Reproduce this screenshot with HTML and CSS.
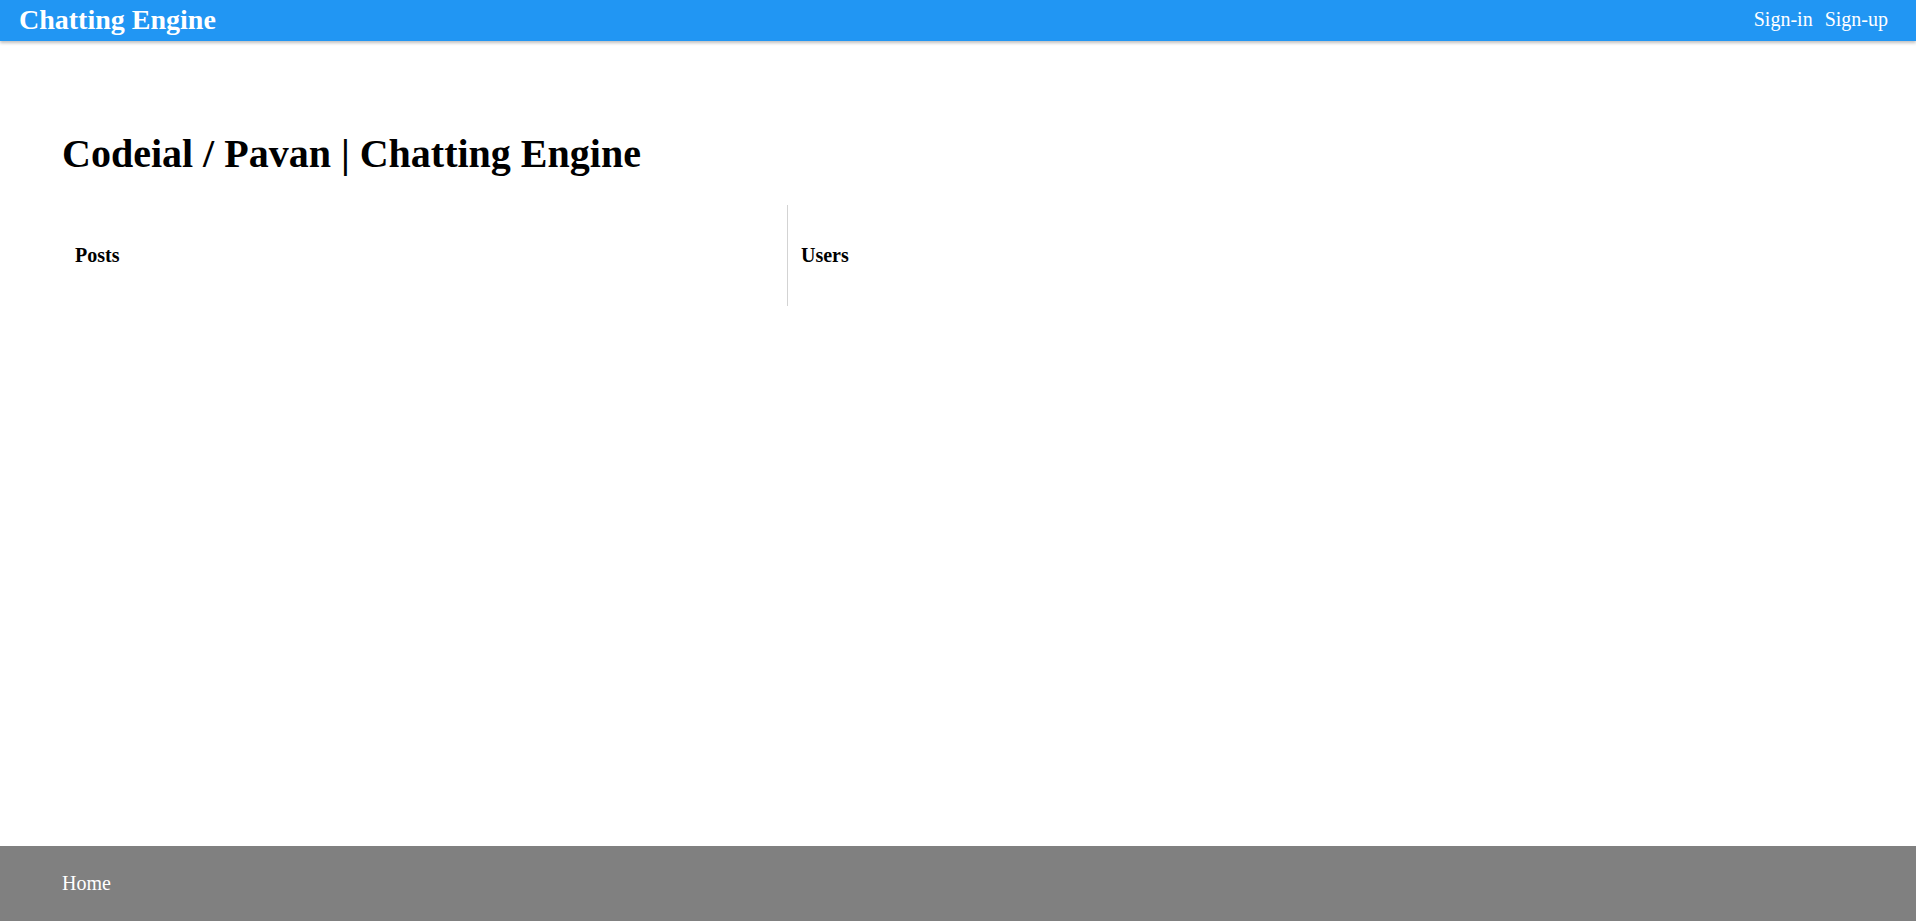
FILE: index.html
```html
<!DOCTYPE html>
<html>
<head>
<meta charset="utf-8">
<title>Chatting Engine</title>
<link rel="stylesheet" href="styles.css">
</head>
<body>
<header class="topbar">
  <a class="logo" href="#">Chatting Engine</a>
  <nav class="auth">
    <a href="#">Sign-in</a>
    <a href="#">Sign-up</a>
  </nav>
</header>
<main class="content">
  <h1 class="page-title">Codeial / Pavan | Chatting Engine</h1>
  <div class="columns">
    <section class="col col-posts">
      <h3 class="col-title">Posts</h3>
    </section>
    <section class="col col-users">
      <h3 class="col-title">Users</h3>
    </section>
  </div>
</main>
<footer class="footer">
  <a href="#">Home</a>
</footer>
</body>
</html>
```
FILE: styles.css
```css
html, body {
  margin: 0;
  padding: 0;
}
body {
  font-family: "Liberation Serif", "Times New Roman", serif;
  min-height: 100vh;
  display: flex;
  flex-direction: column;
  background: #fff;
  color: #000;
}
a {
  color: #fff;
  text-decoration: none;
}
.topbar {
  height: 41px;
  background: #2196f3;
  display: flex;
  align-items: center;
  justify-content: space-between;
  padding: 0 28px 0 19px;
  box-shadow: 0 2px 3px rgba(0, 0, 0, 0.25);
  position: relative;
  z-index: 1;
}
.logo {
  font-size: 28px;
  font-weight: bold;
  line-height: 32px;
  margin-top: -2px;
}
.auth {
  display: flex;
  gap: 12px;
  font-size: 20px;
  line-height: 23px;
  margin-top: -3px;
}
.content {
  flex: 1;
  padding: 90px 62px 0;
}
.page-title {
  margin: 0;
  font-size: 40px;
  line-height: 46px;
  font-weight: bold;
}
.columns {
  display: flex;
  margin-top: 28px;
}
.col {
  height: 101px;
  box-sizing: border-box;
  padding: 39px 13px 0;
}
.col-posts {
  width: 726px;
  border-right: 1px solid #d3d3d3;
}
.col-users {
  flex: 1;
}
.col-title {
  margin: 0;
  font-size: 20px;
  line-height: 23px;
  font-weight: bold;
}
.footer {
  height: 75px;
  box-sizing: border-box;
  background: #808080;
  padding: 26px 62px 0;
  font-size: 20px;
  line-height: 23px;
}
```
